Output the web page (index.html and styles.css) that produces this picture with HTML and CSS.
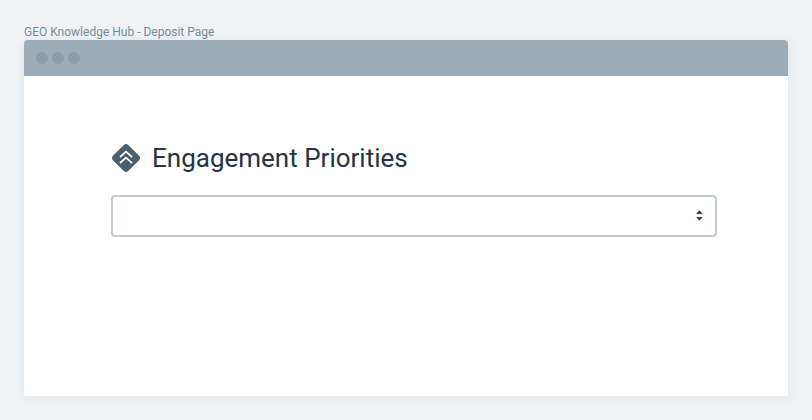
FILE: index.html
```html
<!DOCTYPE html>
<html lang="en">
<head>
<meta charset="utf-8">
<meta name="viewport" content="width=device-width, initial-scale=1">
<title>GEO Knowledge Hub - Deposit Page</title>
<link rel="stylesheet" href="styles.css">
</head>
<body>
<p class="caption">GEO Knowledge Hub - Deposit Page</p>
<div class="window">
  <div class="titlebar">
    <span class="dot"></span><span class="dot"></span><span class="dot"></span>
  </div>
  <main class="content">
    <label class="heading" for="priorities">
      <svg class="icon" viewBox="0 0 30 30" aria-hidden="true">
        <rect x="4.2" y="4.2" width="21.6" height="21.6" rx="3.4" transform="rotate(45 15 15)" fill="#4b5f6d"/>
        <path d="M9 14 15 8.6l6 5.4M9 20l6-5.4 6 5.4" fill="none" stroke="#fff" stroke-width="1.7"/>
      </svg>
      <span>Engagement Priorities</span>
    </label>
    <div class="field">
      <select id="priorities" class="select"><option value=""></option></select>
      <svg class="arrows" viewBox="0 0 8 12" aria-hidden="true">
        <path d="M1.6 3.7 4.4.7l2.8 3zM1.6 7.3l2.8 3 2.8-3z" fill="#273444" stroke="#273444" stroke-width=".6" stroke-linejoin="round"/>
      </svg>
    </div>
  </main>
</div>
</body>
</html>
```
FILE: styles.css
```css
* {
  box-sizing: border-box;
}

body {
  margin: 0;
  min-height: 100vh;
  padding: 24px;
  display: flex;
  flex-direction: column;
  background: #eff3f6;
  color: #273444;
  font-family: Roboto, "Liberation Sans", sans-serif;
}

.caption {
  margin: 0;
  font-size: 12px;
  line-height: 16px;
  color: #778a99;
}

.window {
  flex: 1;
  display: flex;
  flex-direction: column;
  background: #fff;
  border-radius: 4px 4px 0 0;
  box-shadow: 0 2px 12px rgba(39, 52, 68, 0.08);
}

.titlebar {
  display: flex;
  align-items: center;
  gap: 4px;
  height: 36px;
  padding: 0 12px;
  background: #9dacb9;
  border-radius: 4px 4px 0 0;
}

.dot {
  width: 12px;
  height: 12px;
  border-radius: 50%;
  background: #8d9dab;
}

.content {
  padding: 64px 71px 64px 87px;
}

.heading {
  display: flex;
  align-items: center;
  gap: 11px;
  font-size: 26px;
  line-height: 36px;
}

.icon {
  width: 30px;
  height: 30px;
}

.field {
  position: relative;
  margin-top: 19px;
}

.select {
  display: block;
  width: 100%;
  height: 42px;
  padding: 0 32px 0 12px;
  border: 2px solid #c1cbd5;
  border-radius: 4px;
  background: #fff;
  color: inherit;
  font: inherit;
  font-size: 16px;
  appearance: none;
}

.arrows {
  position: absolute;
  top: 15px;
  right: 14px;
  width: 8px;
  height: 12px;
  pointer-events: none;
}
```
